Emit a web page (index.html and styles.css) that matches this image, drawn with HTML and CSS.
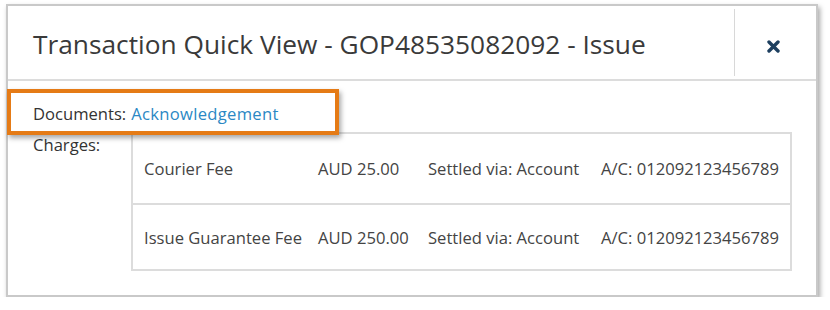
FILE: index.html
```html
<!DOCTYPE html>
<html lang="en">
<head>
    <meta charset="UTF-8">
    <title>Transaction Quick View</title>
    <link rel="stylesheet" href="styles.css">
</head>
<body>
    <div class="modal">
        <div class="modal-header">
            <h2 class="modal-title">Transaction Quick View - GOP48535082092 - Issue</h2>
            <button class="close-button" aria-label="Close">
                <svg width="13" height="13" viewBox="0 0 13 13">
                    <path d="M2 2 L11 11 M11 2 L2 11" stroke="#1d3f5f" stroke-width="3.4" stroke-linecap="round"/>
                </svg>
            </button>
        </div>
        <div class="modal-body">
            <div class="row docs-row">
                <span class="label">Documents:</span>
                <a class="doc-link" href="#">Acknowledgement</a>
            </div>
            <div class="row charges-row">
                <span class="label charges-label">Charges:</span>
                <table class="charges">
                    <tr>
                        <td class="c-name">Courier Fee</td>
                        <td class="c-amount">AUD 25.00</td>
                        <td class="c-settle">Settled via: Account</td>
                        <td class="c-acct">A/C: 012092123456789</td>
                    </tr>
                    <tr>
                        <td class="c-name">Issue Guarantee Fee</td>
                        <td class="c-amount">AUD 250.00</td>
                        <td class="c-settle">Settled via: Account</td>
                        <td class="c-acct">A/C: 012092123456789</td>
                    </tr>
                </table>
            </div>
            <div class="highlight"></div>
        </div>
    </div>
</body>
</html>
```

FILE: styles.css
```css
* {
    box-sizing: border-box;
}

body {
    margin: 0;
    background: #fff;
    font-family: 'Open Sans', 'Liberation Sans', sans-serif;
    color: #3a3a3a;
}

.modal {
    margin: 4px 0 0 6px;
    width: 812px;
    height: 293px;
    border: 2px solid #c9c9c9;
    background: #fff;
    box-shadow: 2px 3px 5px rgba(0, 0, 0, 0.35);
}

.modal-header {
    display: flex;
    height: 75px;
    border-bottom: 2px solid #dcdcdc;
}

.modal-title {
    flex: 1;
    margin: 0;
    padding: 20px 0 0 25px;
    font-size: 26.3px;
    font-weight: normal;
    color: #3a3a3a;
    white-space: nowrap;
}

.close-button {
    display: flex;
    align-items: center;
    justify-content: center;
    width: 82px;
    margin: 3px 0 3px;
    border: none;
    border-left: 1px solid #d8d8d8;
    background: none;
    padding: 8px 4px 0 0;
    cursor: pointer;
}

.modal-body {
    position: relative;
    padding: 22px 24px 0 25px;
    font-size: 16.6px;
}

.row {
    display: flex;
}

.label {
    color: #333;
}

.docs-row {
    height: 29px;
    line-height: 22px;
}

.docs-row .label {
    margin-right: 5px;
}

.doc-link {
    color: #2b88c4;
    text-decoration: none;
    letter-spacing: 0.3px;
}

.charges-label {
    width: 98px;
    flex-shrink: 0;
    margin-top: 1px;
}

.charges {
    width: 662px;
    border-collapse: collapse;
    border: 2px solid #dcdcdc;
}

.charges td {
    height: 66px;
    padding: 0 0 0 11px;
    border-top: 2px solid #dcdcdc;
    color: #444;
    white-space: nowrap;
}

.charges tr:first-child td {
    height: 71px;
}

.c-name {
    width: 175px;
}

.c-amount {
    width: 110px;
}

.c-settle {
    width: 173px;
}

.highlight {
    position: absolute;
    left: -1px;
    top: 8px;
    width: 332px;
    height: 46px;
    border: 4px solid #e57b16;
    box-shadow: 2px 3px 5px rgba(0, 0, 0, 0.35);
}
```
